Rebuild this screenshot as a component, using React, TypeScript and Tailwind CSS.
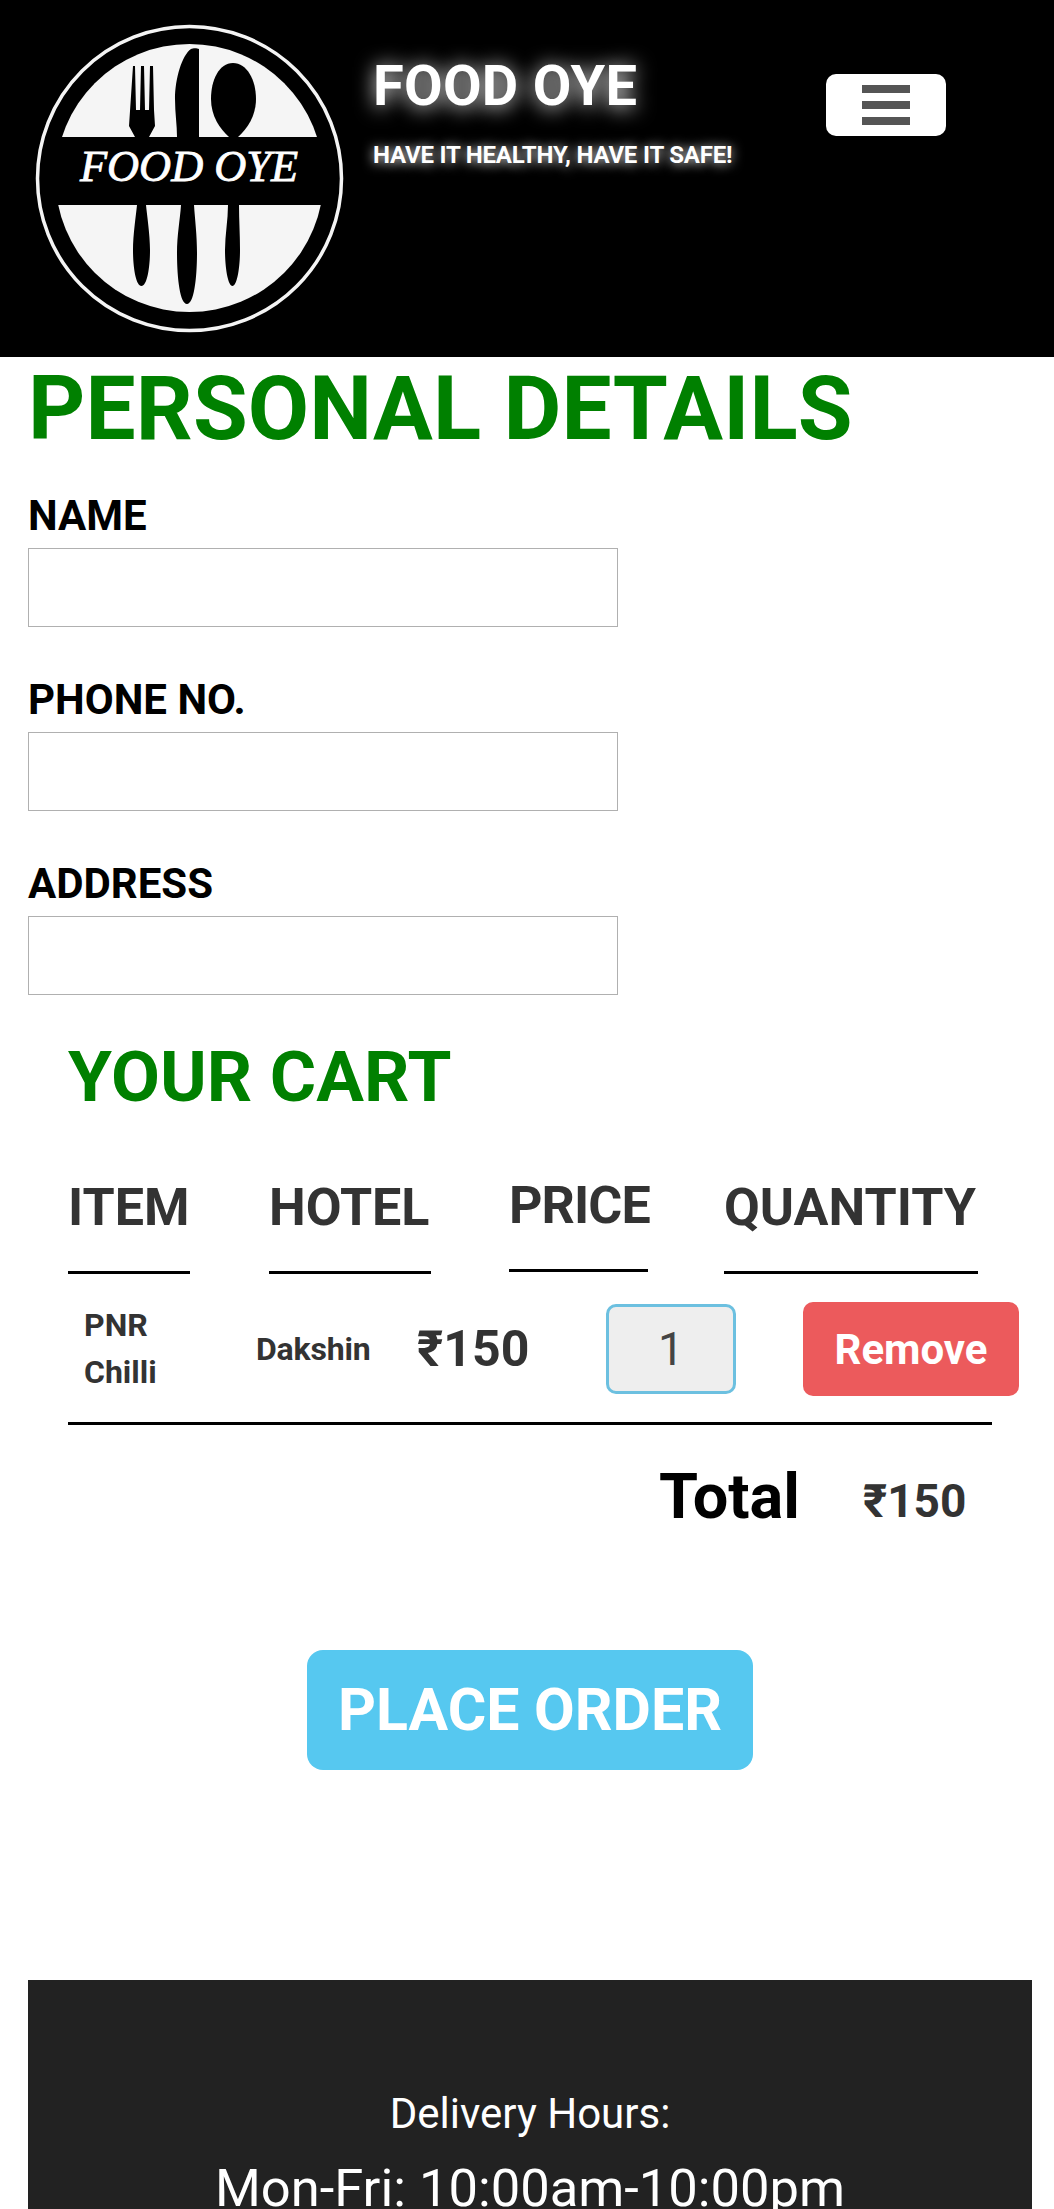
const font = "font-['Roboto','Liberation_Sans',sans-serif]";

function Logo() {
  return (
    <svg viewBox="24 14 330 330" className="h-[330px] w-[330px] shrink-0">
      <circle cx="189.5" cy="178.5" r="152" fill="#000" stroke="#f4f4f4" strokeWidth="3.5" />
      <circle cx="189.5" cy="178" r="134" fill="#f5f5f5" />
      {/* fork */}
      <path d="M132 66h2l1 44h4l1-44h3l1 44h4l1-44h3l1 44 1 16-6 11v68h-14v-68l-6-11z" fill="#000" transform="translate(1 0)" />
      <path d="M137 205h9c1 10 4 30 4 45 0 18-3 36-8.500 36S133 268 133 250c0-15 3-35 4-45z" fill="#000" />
      {/* knife */}
      <path d="M199 49c-2-1-6-1-8 0-9 6-16 30-16 50 0 14 2 26 2 38h22z" fill="#000" />
      <path d="M181 205h13c1 15 3 30 3 48 0 25-3 51-10 51s-10-26-10-51c0-18 3-33 4-48z" fill="#000" />
      {/* spoon */}
      <path d="M233 63c14 0 23 17 23 36 0 17-9 30-18 38h-9c-9-8-18-21-18-38 0-19 8-36 22-36z" fill="#000" />
      <path d="M228 205h11c0 15 1 30 1 45 0 18-3 36-7.500 36S225 268 225 250c0-15 3-30 3-45z" fill="#000" />
      <rect x="52" y="137" width="276" height="68" fill="#000" />
      <text
        x="189"
        y="181"
        textAnchor="middle"
        textLength="218"
        lengthAdjust="spacingAndGlyphs"
        fill="#fff"
        stroke="#fff"
        strokeWidth="0.8"
        fontSize="44"
        fontStyle="italic"
        fontFamily="'Liberation Serif', serif"
      >
        FOOD OYE
      </text>
    </svg>
  );
}

function Field({ label }: { label: string }) {
  return (
    <div className="mb-[47px]">
      <label className="mb-[6px] block text-[42px] leading-[52px] font-bold text-black">{label}</label>
      <input className="block h-[79px] w-[590px] border border-[#b0b0b0] bg-white" />
    </div>
  );
}

function Heading({ title, className }: { title: string; className: string }) {
  return (
    <div className={className}>
      <div className="text-[52px] leading-[60px] font-bold text-[#333]">{title}</div>
      <div className="mt-[33px] h-[3px] bg-black" />
    </div>
  );
}

export default function App() {
  return (
    <div className={`${font} h-[2209px] w-[1054px] overflow-hidden bg-white`}>
      <header className="flex h-[357px] bg-black pt-[14px] pl-6">
        <Logo />
        <div className="ml-[19px] w-[453px] pt-[42px]">
          <h1 className="text-[56px] leading-[60px] font-bold tracking-[0.3px] text-white [text-shadow:0_2px_20px_#ffffff]">
            FOOD OYE
          </h1>
          <p className="mt-[25px] text-[24px] leading-[28px] font-bold tracking-[-0.2px] text-white [text-shadow:0_1px_12px_#ffffff]">
            HAVE IT HEALTHY, HAVE IT SAFE!
          </p>
        </div>
        <button className="mt-[60px] flex h-[62px] w-[120px] flex-col items-center justify-center gap-2 rounded-[10px] bg-white">
          <span className="h-2 w-12 bg-[#555]" />
          <span className="h-2 w-12 bg-[#555]" />
          <span className="h-2 w-12 bg-[#555]" />
        </button>
      </header>

      <main className="pl-7">
        <h2 className="pt-1 text-[89px] leading-[96px] font-bold tracking-[0.15px] whitespace-nowrap text-[#008000]">
          PERSONAL DETAILS
        </h2>
        <div className="mt-[33px]">
          <Field label="NAME" />
          <Field label="PHONE NO." />
          <Field label="ADDRESS" />
        </div>

        <h2 className="mt-[-7px] pl-10 text-[71px] leading-[84px] font-bold text-[#008000]">
          YOUR CART
        </h2>

        <div className="mt-[59px] flex pl-10">
          <Heading title="ITEM" className="w-[122px]" />
          <Heading title="HOTEL" className="ml-[79px] w-[162px]" />
          <Heading title="PRICE" className="ml-[78px] w-[139px] -translate-y-[2px] tracking-[-0.9px]" />
          <Heading title="QUANTITY" className="ml-[76px] w-[254px]" />
        </div>

        <div className="mt-[15px] flex h-[120px] items-center pl-10">
          <div className="ml-4 w-[172px] text-[32px] leading-[47px] font-bold text-[#333]">
            PNR
            <br />
            Chilli
          </div>
          <div className="w-[161px] text-[32px] font-bold tracking-[-0.2px] text-[#333]">Dakshin</div>
          <div className="w-[189px] text-[50px] leading-none font-bold text-[#333]">₹150</div>
          <input
            readOnly
            value="1"
            className="h-[90px] w-[130px] rounded-[10px] border-[3px] border-[#6cc0e0] bg-[#eeeeee] text-center text-[46px] text-[#444]"
          />
          <button className="ml-[67px] h-[94px] w-[216px] rounded-[10px] bg-[#ec5a5c] text-[42px] font-bold text-white">
            Remove
          </button>
        </div>

        <div className="mt-[13px] ml-10 h-[3px] w-[924px] bg-black" />

        <div className="mt-[37px] flex items-end pl-[631px]">
          <div className="text-[63px] leading-[70px] font-bold text-black">Total</div>
          <div className="ml-[63px] pb-[3px] text-[46px] leading-[56px] font-bold text-[#333]">₹150</div>
        </div>

        <div className="mt-[118px] ml-[279px]">
          <button className="h-[120px] w-[446px] rounded-2xl bg-[#56c8f0] text-[59px] font-bold text-white">
            PLACE ORDER
          </button>
        </div>

        <footer className="mt-[210px] h-[400px] w-[1004px] bg-[#222222] pt-[106px] text-center text-white">
          <p className="text-[42px] leading-[56px]">Delivery Hours:</p>
          <p className="mt-[12px] text-[52.500px] leading-[68px]">Mon-Fri: 10:00am-10:00pm</p>
        </footer>
      </main>
    </div>
  );
}
